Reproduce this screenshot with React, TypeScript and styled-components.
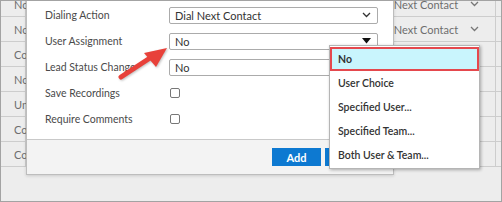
import React from 'react'
import styled, { createGlobalStyle } from 'styled-components'

const GlobalStyle = createGlobalStyle`
    html, body {
        margin: 0;
        padding: 0;
        background: #fff;
    }
    * {
        box-sizing: border-box;
    }
`

const Frame = styled.div`
    position: relative;
    width: 502px;
    height: 202px;
    overflow: hidden;
    border: 1px solid #a3a3a3;
    background: #ededed;
    font-family: Lato, "Open Sans", sans-serif;
`

const Table = styled.div`
    display: flex;
    flex-direction: column;
    margin-top: -9px;
`

const TableRow = styled.div`
    display: grid;
    grid-template-columns: 5px 1fr 132px 5px;
    height: 25px;
    border-bottom: 1px solid #cdcdcd;
`

const Cell = styled.div`
    display: flex;
    align-items: center;
    justify-content: space-between;
    padding: 0 16px 0 8px;
    border-right: 1px solid #cdcdcd;
    color: #6e6e6e;
    font-size: 11px;
    white-space: nowrap;
    overflow: hidden;
    &:last-child {
        border-right: none;
    }
`

const Modal = styled.div`
    position: absolute;
    left: 25px;
    top: -14px;
    width: 368px;
    display: flex;
    flex-direction: column;
    background: #fff;
    border: 1px solid #bdbdbd;
    box-shadow: 0 1px 3px rgba(0, 0, 0, 0.15);
`

const ModalBody = styled.div`
    display: flex;
    flex-direction: column;
    padding: 14px 0 7px 18px;
`

const FormRow = styled.div`
    display: grid;
    grid-template-columns: 124px 209px;
    align-items: center;
    height: 26px;
`

const Label = styled.div`
    color: #4a4a4a;
    font-size: 10.5px;
    white-space: nowrap;
`

const Field = styled.div`
    display: flex;
    align-items: center;
    justify-content: space-between;
    height: 17px;
    padding: 0 6px 0 5px;
    border: 1px solid #ababab;
    border-radius: 2px;
    background: #fff;
    color: #333;
    font-size: 11px;
`

const Checkbox = styled.div`
    width: 10px;
    height: 10px;
    margin-left: 1px;
    border: 1px solid #777;
    border-radius: 2px;
    background: #fff;
`

const ModalFooter = styled.div`
    display: flex;
    justify-content: flex-end;
    gap: 4px;
    height: 35px;
    padding: 8px 19px 0 0;
    border-top: 1px solid #c9c9c9;
    background: #f3f3f3;
`

const Button = styled.div`
    display: flex;
    align-items: center;
    justify-content: center;
    width: 49px;
    height: 18px;
    background: #0d79d1;
    color: #fff;
    font-size: 11px;
    font-weight: 700;
`

const Dropdown = styled.div`
    position: absolute;
    left: 328px;
    top: 44px;
    width: 151px;
    display: flex;
    flex-direction: column;
    padding: 1px 0;
    background: #fff;
    border: 1px solid #b5b5b5;
    box-shadow: 1px 1px 3px rgba(0, 0, 0, 0.3);
`

const Option = styled.div<{ selected?: boolean }>`
    display: flex;
    align-items: center;
    height: 24px;
    padding-left: ${(props) => (props.selected ? '6px' : '8px')};
    background: ${(props) => (props.selected ? '#c9f5fd' : '#fff')};
    border: ${(props) => (props.selected ? '2px solid #e5484d' : 'none')};
    color: #333;
    font-size: 10.5px;
    font-weight: ${(props) => (props.selected ? 700 : 600)};
    white-space: nowrap;
`

const Callout = styled.svg`
    position: absolute;
    left: 110px;
    top: 40px;
    overflow: visible;
    filter: drop-shadow(1px 1px 1px rgba(0, 0, 0, 0.25));
`

const Chevron = ({ color = '#333' }: { color?: string }) => (
    <svg width="9" height="6" viewBox="0 0 9 6">
        <polyline points="1,1 4.5,4.5 8,1" fill="none" stroke={color} strokeWidth="1.3" />
    </svg>
)

const Caret = () => (
    <svg width="9" height="6" viewBox="0 0 9 6">
        <polygon points="0,0 9,0 4.5,5.5" fill="#111" />
    </svg>
)

const rows = [
    ['No', 'Dial Next Contact'],
    ['No', 'Dial Next Contact'],
    ['Contact', 'Dial Next Contact'],
    ['No', 'Dial Next Contact'],
    ['Unassigned', 'Dial Next Contact'],
    ['Contact', 'Dial Next Contact'],
    ['Contact', 'Dial Next Contact'],
]

const options = ['No', 'User Choice', 'Specified User...', 'Specified Team...', 'Both User & Team...']

export default function App() {
    return (
        <>
            <GlobalStyle />
            <Frame>
                <Table>
                    {rows.map(([status, action], i) => (
                        <TableRow key={i}>
                            <Cell />
                            <Cell>{status}</Cell>
                            <Cell>
                                {action}
                                <Chevron color="#777" />
                            </Cell>
                            <Cell />
                        </TableRow>
                    ))}
                </Table>

                <Modal>
                    <ModalBody>
                        <FormRow>
                            <Label>Dialing Action</Label>
                            <Field>
                                Dial Next Contact
                                <Chevron />
                            </Field>
                        </FormRow>
                        <FormRow>
                            <Label>User Assignment</Label>
                            <Field>
                                No
                                <Caret />
                            </Field>
                        </FormRow>
                        <FormRow>
                            <Label>Lead Status Change</Label>
                            <Field>No</Field>
                        </FormRow>
                        <FormRow>
                            <Label>Save Recordings</Label>
                            <Checkbox />
                        </FormRow>
                        <FormRow>
                            <Label>Require Comments</Label>
                            <Checkbox />
                        </FormRow>
                    </ModalBody>
                    <ModalFooter>
                        <Button>Add</Button>
                        <Button>Cancel</Button>
                    </ModalFooter>
                </Modal>

                <Dropdown>
                    {options.map((o, i) => (
                        <Option key={o} selected={i === 0}>
                            {o}
                        </Option>
                    ))}
                </Dropdown>

                <Callout width="60" height="40" viewBox="0 0 60 40">
                    <line x1="10" y1="36" x2="42" y2="15" stroke="#e8413a" strokeWidth="5" strokeLinecap="round" />
                    <polygon points="56,7 33,12 45,26" fill="#e8413a" />
                </Callout>
            </Frame>
        </>
    )
}
